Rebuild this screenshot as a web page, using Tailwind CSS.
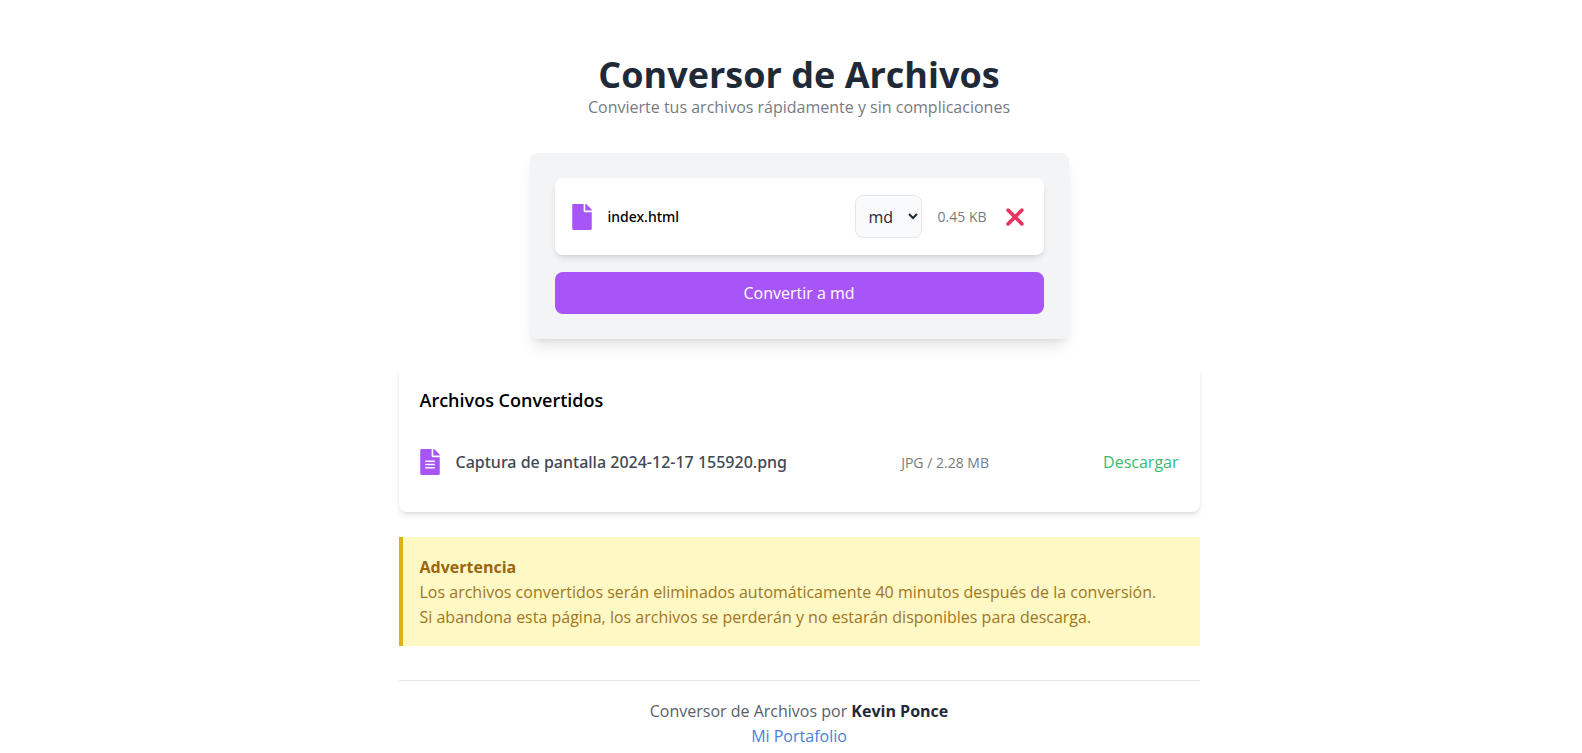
<!DOCTYPE html>
<html lang="es">
<head>
<meta charset="utf-8">
<meta name="viewport" content="width=device-width, initial-scale=1">
<title>Conversor de Archivos</title>
<script src="https://cdn.jsdelivr.net/npm/@tailwindcss/browser@4"></script>
</head>
<body class="bg-white pt-[55px] pr-4 pl-8 font-['Open_Sans','Noto_Sans',sans-serif] text-[16px] leading-[25px] text-black">
  <main class="mx-auto max-w-[801px]">
    <header class="text-center">
      <h1 class="text-[36px] font-bold leading-[40px] text-[#1f2937]">Conversor de Archivos</h1>
      <p class="text-[#777b82]">Convierte tus archivos rápidamente y sin complicaciones</p>
    </header>

    <form class="mx-auto mt-[33px] flex max-w-[539px] flex-col gap-[17px] rounded-lg bg-[#f3f4f6] p-[25px] shadow-lg">
      <div class="flex items-center gap-4 rounded-lg bg-white p-[17px] shadow-md">
        <svg class="h-[26px] w-5 shrink-0 fill-[#a855f7]" viewBox="0 0 384 512" aria-hidden="true"><path d="M224 136V0H24C10.700 0 0 10.700 0 24v464c0 13.300 10.700 24 24 24h336c13.300 0 24-10.700 24-24V160H248c-13.200 0-24-10.800-24-24zm160-14.100v6.100H256V0h6.100c6.400 0 12.500 2.500 17 7l97.900 98c4.500 4.500 7 10.600 7 16.900z"/></svg>
        <label for="formato" class="flex-1 font-['Noto_Sans',sans-serif] text-[14px] font-medium">index.html</label>
        <select id="formato" class="h-[43px] w-[67px] rounded-lg border border-[#e5e7eb] bg-[#f9fafb] pl-[9px] text-[16px] text-[#1f2937]">
          <option>md</option>
        </select>
        <span class="text-[14px] text-[#777b82]">0.45 KB</span>
        <button type="button" aria-label="Quitar archivo" class="p-[3px]">
          <svg class="size-[18px]" viewBox="0 0 17 17" fill="none" stroke="#e93360" stroke-width="3.400" stroke-linecap="round" aria-hidden="true"><path d="M2 2l13 13M15 2L2 15"/></svg>
        </button>
      </div>
      <button type="submit" class="h-[42px] rounded-lg bg-[#a855f7] text-white">Convertir a md</button>
    </form>

    <section class="relative mt-[25px] rounded-lg bg-white px-[21px] pt-[21px] pb-5 shadow-md">
      <h2 class="text-[18px] font-semibold leading-[30px]">Archivos Convertidos</h2>
      <div class="mt-[17px] flex items-center py-[17px]">
        <svg class="mr-4 h-[26px] w-5 shrink-0 fill-[#a855f7]" viewBox="0 0 384 512" aria-hidden="true"><path d="M224 136V0H24C10.700 0 0 10.700 0 24v464c0 13.300 10.700 24 24 24h336c13.300 0 24-10.700 24-24V160H248c-13.200 0-24-10.800-24-24zm64 236c0 6.600-5.400 12-12 12H108c-6.600 0-12-5.400-12-12v-8c0-6.600 5.400-12 12-12h168c6.600 0 12 5.400 12 12v8zm0-64c0 6.600-5.400 12-12 12H108c-6.600 0-12-5.400-12-12v-8c0-6.600 5.400-12 12-12h168c6.600 0 12 5.400 12 12v8zm0-72v8c0 6.600-5.400 12-12 12H108c-6.600 0-12-5.400-12-12v-8c0-6.600 5.400-12 12-12h168c6.600 0 12 5.400 12 12zm96-114.100v6.100H256V0h6.100c6.400 0 12.500 2.500 17 7l97.900 98c4.500 4.500 7 10.600 7 16.900z"/></svg>
        <div class="flex flex-1 items-center justify-between">
          <span class="font-['Noto_Sans',sans-serif] font-medium text-[#414853]">Captura de pantalla 2024-12-17 155920.png</span>
          <span class="text-[14px] text-[#777b82]">JPG / 2.28 MB</span>
          <a href="#" class="text-[#3dba6c]">Descargar</a>
        </div>
      </div>
    </section>

    <aside class="mt-[25px] border-l-4 border-[#dfb01c] bg-[#fef8c5] px-[17px] pt-[18px] pb-4 text-[#a0761f]">
      <p class="font-bold text-[#9a650c]">Advertencia</p>
      <p>Los archivos convertidos serán eliminados automáticamente 40 minutos después de la conversión.</p>
      <p>Si abandona esta página, los archivos se perderán y no estarán disponibles para descarga.</p>
    </aside>

    <footer class="mt-[34px] border-t border-[#e5e7eb] pt-[18px] text-center text-[#5a6068]">
      <p>Conversor de Archivos por <strong class="font-bold text-[#1f2937]">Kevin Ponce</strong></p>
      <a href="#" class="text-[#4a80d8]">Mi Portafolio</a>
    </footer>
  </main>
</body>
</html>
